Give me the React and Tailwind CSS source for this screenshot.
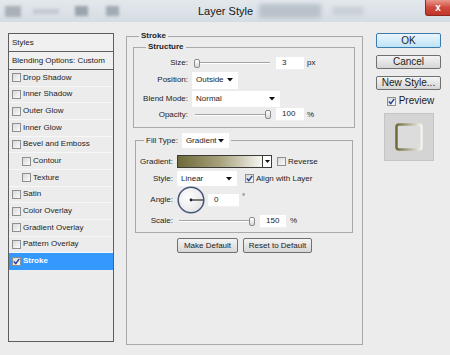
import React from 'react'

const LIST = [
  { label: 'Drop Shadow' },
  { label: 'Inner Shadow' },
  { label: 'Outer Glow' },
  { label: 'Inner Glow' },
  { label: 'Bevel and Emboss' },
  { label: 'Contour', indent: true },
  { label: 'Texture', indent: true },
  { label: 'Satin' },
  { label: 'Color Overlay' },
  { label: 'Gradient Overlay' },
  { label: 'Pattern Overlay' },
  { label: 'Stroke', checked: true, active: true },
]

function Check({ checked }) {
  return (
    <span className="w-[9px] h-[9px] shrink-0 border border-[#8e8f8f] bg-gradient-to-br from-[#d9d9d9] to-[#fbfbfb] flex items-center justify-center">
      {checked && (
        <svg width="7" height="7" viewBox="0 0 7 7">
          <path d="M0.8 3.6 L2.8 5.6 L6.2 0.8" stroke="#1f3f99" strokeWidth="1.4" fill="none" />
        </svg>
      )}
    </span>
  )
}

function Arrow() {
  return (
    <svg width="6" height="4" viewBox="0 0 6 4" className="shrink-0">
      <path d="M0 0H6L3 3.6Z" fill="#111" />
    </svg>
  )
}

function Thumb() {
  return <div className="w-[6px] h-[9px] shrink-0 rounded-[2px] border border-[#8a8a8a] bg-gradient-to-b from-white to-[#d8d8d8]"></div>
}

function Line() {
  return <div className="flex-1 h-[2px] border-t border-[#a4a4a4] border-b border-b-white"></div>
}

function Select({ value, w, h }) {
  return (
    <div className={`${w} ${h} bg-white flex items-center justify-between pl-[4px] pr-[5px]`}>
      <span>{value}</span>
      <Arrow />
    </div>
  )
}

function Input({ value, w }) {
  return <div className={`${w} h-[13px] bg-white flex items-center pl-[6px] border-b border-[#f0f0f0]`}>{value}</div>
}

function Btn({ children, w, h = 'h-[14px]', primary }) {
  return (
    <div
      className={`${w} ${h} rounded-[2px] border flex items-center justify-center ${
        primary
          ? 'border-[#3a7cb0] bg-gradient-to-b from-[#eaf6fd] to-[#bfe3f6]'
          : 'border-[#707070] bg-gradient-to-b from-[#f4f4f4] to-[#d6d6d6]'
      }`}
    >
      {children}
    </div>
  )
}

export default function App() {
  return (
    <div className="w-[450px] h-[355px] overflow-hidden bg-[#ececec] text-[#1c1c1c] text-[8px] leading-[10px] font-['Liberation_Sans',Arial,sans-serif] flex flex-col">
      {/* title bar */}
      <div className="h-[22px] shrink-0 flex items-start bg-gradient-to-b from-[#e3e8ed] to-[#d5dce3]">
        <div className="w-[198px] h-full flex items-center pl-[5px]">
          <div className="w-[16px] h-[11px] bg-[#a9b1b8] blur-[1.5px]"></div>
          <div className="ml-[12px] w-[26px] h-[5px] bg-[#c3cad0] blur-[1.5px]"></div>
          <div className="ml-[16px] w-[13px] h-[10px] bg-[#9ba4ac] blur-[1.5px]"></div>
          <div className="ml-[18px] w-[13px] h-[10px] bg-[#a2abb3] blur-[1.5px]"></div>
        </div>
        <div className="h-full flex items-center text-[11px] leading-[12px] text-[#151515]">Layer Style</div>
        <div className="h-full flex items-center ml-[6px]">
          <div className="w-[62px] h-[14px] bg-[#b9c2ca] blur-[2px]"></div>
          <div className="ml-[12px] w-[30px] h-[8px] bg-[#c7ced5] blur-[2px]"></div>
        </div>
        <div className="ml-auto w-[25px] h-[16px] rounded-bl-[3px] border-l border-b border-[#8c2a22] bg-gradient-to-b from-[#e7968c] via-[#cf4a3d] to-[#c2342a] flex items-center justify-center text-white text-[10px] font-bold">
          x
        </div>
      </div>

      {/* body */}
      <div className="flex items-start pt-[11px] pl-[8px]">
        {/* styles list */}
        <div className="w-[106px] h-[309px] border border-[#5e5e5e] flex flex-col">
          <div className="h-[18px] border-b border-[#5e5e5e] bg-[#f0f0f0] flex items-center px-[3px]">Styles</div>
          <div className="h-[18px] border-b border-[#5e5e5e] bg-[#f0f0f0] flex items-center px-[3px]">Blending Options: Custom</div>
          {LIST.map(item => (
            <div
              key={item.label}
              className={`h-[16.67px] shrink-0 flex items-center gap-[2px] border-b ${
                item.active ? 'bg-[#3399ff] text-white font-bold border-[#3399ff]' : 'border-[#f7f7f7]'
              } ${item.indent ? 'pl-[13px]' : 'pl-[3px]'}`}
            >
              <Check checked={item.checked} />
              <span>{item.label}</span>
            </div>
          ))}
        </div>

        {/* stroke group */}
        <fieldset className="ml-[12px] mt-[-2px] w-[237px] h-[314px] border border-[#a9a9a9] pl-[6px] pr-[7px] flex flex-col">
          <legend className="ml-[6px] px-[2px] font-bold">Stroke</legend>

          <fieldset className="mt-[1px] w-[222px] border border-[#a9a9a9] pb-[6px]">
            <legend className="ml-[12px] px-[2px] font-bold">Structure</legend>
            <div className="pt-[4px] flex flex-col">
              <div className="h-[14px] flex items-center">
                <span className="w-[54px] text-right">Size:</span>
                <div className="ml-[6px] w-[76px] flex items-center">
                  <Thumb />
                  <Line />
                </div>
                <div className="ml-[6px]"><Input value="3" w="w-[28px]" /></div>
                <span className="ml-[3px]">px</span>
              </div>
              <div className="mt-[1px] h-[18px] flex items-center">
                <span className="w-[54px] text-right">Position:</span>
                <div className="ml-[4px]"><Select value="Outside" w="w-[46px]" h="h-[17px]" /></div>
              </div>
              <div className="mt-[1px] h-[17px] flex items-center">
                <span className="w-[54px] text-right">Blend Mode:</span>
                <div className="ml-[4px]"><Select value="Normal" w="w-[88px]" h="h-[16px]" /></div>
              </div>
              <div className="mt-[1px] h-[13px] flex items-center">
                <span className="w-[54px] text-right">Opacity:</span>
                <div className="ml-[7px] w-[76px] flex items-center">
                  <Line />
                  <Thumb />
                </div>
                <div className="ml-[5px]"><Input value="100" w="w-[28px]" /></div>
                <span className="ml-[3px]">%</span>
              </div>
            </div>
          </fieldset>

          <fieldset className="mt-[5px] mx-[2px] w-[218px] border border-[#a9a9a9] pb-[5px]">
            <legend className="ml-[8px] px-[2px] flex items-center gap-[4px]">
              <span>Fill Type:</span>
              <Select value="Gradient" w="w-[47px]" h="h-[15px]" />
            </legend>
            <div className="pt-[7px] flex flex-col">
              <div className="h-[13px] flex items-center">
                <span className="w-[37px] text-right">Gradient:</span>
                <div className="ml-[4px] w-[95px] h-[13px] border border-[#3c3c3c] flex bg-white">
                  <div className="flex-1 bg-gradient-to-r from-[#6f6a38] via-[#a7a27c] to-[#f7f7f3]"></div>
                  <div className="w-[9px] border-l border-[#3c3c3c] flex items-center justify-center">
                    <svg width="5" height="3" viewBox="0 0 5 3"><path d="M0 0H5L2.5 3Z" fill="#111" /></svg>
                  </div>
                </div>
                <div className="ml-[5px]"><Check /></div>
                <span className="ml-[2px]">Reverse</span>
              </div>
              <div className="mt-[3px] h-[15px] flex items-center">
                <span className="w-[37px] text-right">Style:</span>
                <div className="ml-[4px]"><Select value="Linear" w="w-[60px]" h="h-[15px]" /></div>
                <div className="ml-[8px]"><Check checked /></div>
                <span className="ml-[2px]">Align with Layer</span>
              </div>
              <div className="h-[28px] flex items-center">
                <span className="w-[37px] text-right">Angle:</span>
                <svg width="28" height="28" viewBox="0 0 28 28" className="ml-[4px] shrink-0">
                  <defs>
                    <radialGradient id="dial" cx="0.4" cy="0.4" r="0.7">
                      <stop offset="0" stopColor="#ffffff" />
                      <stop offset="1" stopColor="#e2e2e2" />
                    </radialGradient>
                  </defs>
                  <circle cx="14" cy="14" r="12.8" fill="url(#dial)" stroke="#44557a" strokeWidth="1.5" />
                  <line x1="14" y1="14" x2="26.5" y2="14" stroke="#3a3a3a" strokeWidth="1.3" />
                  <circle cx="14" cy="14" r="1.4" fill="#222" />
                </svg>
                <div className="ml-[3px]"><Input value="0" w="w-[31px]" /></div>
                <span className="ml-[3px] self-start mt-[6px]">°</span>
              </div>
              <div className="mt-[1px] h-[12px] flex items-center">
                <span className="w-[37px] text-right">Scale:</span>
                <div className="ml-[6px] w-[76px] flex items-center">
                  <Line />
                  <Thumb />
                </div>
                <div className="ml-[5px]"><Input value="150" w="w-[26px]" /></div>
                <span className="ml-[4px]">%</span>
              </div>
            </div>
          </fieldset>

          <div className="mt-[5px] ml-[44px] flex gap-[5px]">
            <Btn w="w-[61px]" h="h-[15px]">Make Default</Btn>
            <Btn w="w-[69px]" h="h-[15px]">Reset to Default</Btn>
          </div>
        </fieldset>

        {/* right buttons */}
        <div className="ml-[13px] w-[65px] flex flex-col items-center text-[10px] leading-[12px]">
          <Btn w="w-[65px]" h="h-[15px]" primary>OK</Btn>
          <div className="mt-[7px]"><Btn w="w-[65px]">Cancel</Btn></div>
          <div className="mt-[7px]"><Btn w="w-[65px]">New Style...</Btn></div>
          <div className="mt-[5px] h-[12px] flex items-center gap-[3px] ml-[4px]">
            <Check checked />
            <span>Preview</span>
          </div>
          <div className="mt-[6px] w-[50px] h-[48px] bg-[#d4d4d4] border border-[#c4c4c4] flex items-center justify-center">
            <svg width="30" height="30" viewBox="0 0 30 30">
              <defs>
                <linearGradient id="strk" x1="0" y1="0" x2="1" y2="0">
                  <stop offset="0" stopColor="#6f6a38" />
                  <stop offset="1" stopColor="#f4f4ee" />
                </linearGradient>
              </defs>
              <rect x="2.5" y="2.5" width="25" height="25" rx="2.5" fill="#dcdcdc" stroke="url(#strk)" strokeWidth="2.5" />
            </svg>
          </div>
        </div>
      </div>
    </div>
  )
}
